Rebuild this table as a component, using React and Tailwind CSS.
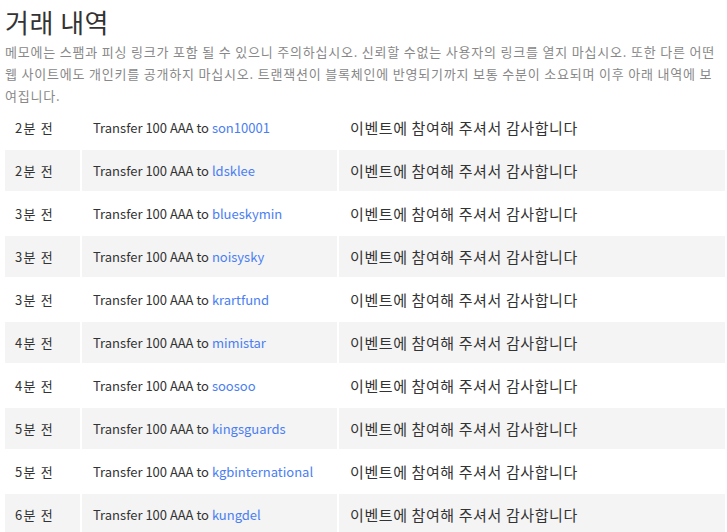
import React from 'react';

const rows = [
  ['2분 전', 'son10001'],
  ['2분 전', 'ldsklee'],
  ['3분 전', 'blueskymin'],
  ['3분 전', 'noisysky'],
  ['3분 전', 'krartfund'],
  ['4분 전', 'mimistar'],
  ['4분 전', 'soosoo'],
  ['5분 전', 'kingsguards'],
  ['5분 전', 'kgbinternational'],
  ['6분 전', 'kungdel'],
];

const App = () => {
  return (
    <div className="w-[727px] h-[532px] overflow-hidden bg-white font-['Noto_Sans_CJK_KR',sans-serif]">
      <div className="px-[5px] pt-[4px]">
        <h2 className="text-[26px] leading-[36px] tracking-[0.5px] text-[#333]">거래 내역</h2>
        <p className="mt-[1px] text-[13px] leading-[21.8px] tracking-[0.8px] text-[#888] break-all">
          메모에는 스팸과 피싱 링크가 포함 될 수 있으니 주의하십시오. 신뢰할 수없는 사용자의 링크를 열지 마십시오. 또한 다른 어떤 웹 사이트에도 개인키를 공개하지 마십시오. 트랜잭션이 블록체인에 반영되기까지 보통 수분이 소요되며 이후 아래 내역에 보여집니다.
        </p>
      </div>
      <table className="ml-[3px] mt-[-1px] w-[724px] border-separate border-spacing-[2px] text-[#333]">
        <tbody>
          {rows.map(([time, user], i) => (
            <tr key={i} className={i % 2 === 1 ? 'bg-[#f4f4f4]' : ''}>
              <td className="w-[75px] h-[41px] pl-[10px] text-[13px] tracking-[1.2px] whitespace-nowrap">{time}</td>
              <td className="w-[255px] pl-[11px] text-[13px] whitespace-nowrap">
                Transfer 100 AAA to <a className="text-[#4a7ef2]">{user}</a>
              </td>
              <td className="pl-[11px] text-[15px] tracking-[0.6px] whitespace-nowrap">이벤트에 참여해 주셔서 감사합니다</td>
            </tr>
          ))}
        </tbody>
      </table>
    </div>
  );
};

export default App;
